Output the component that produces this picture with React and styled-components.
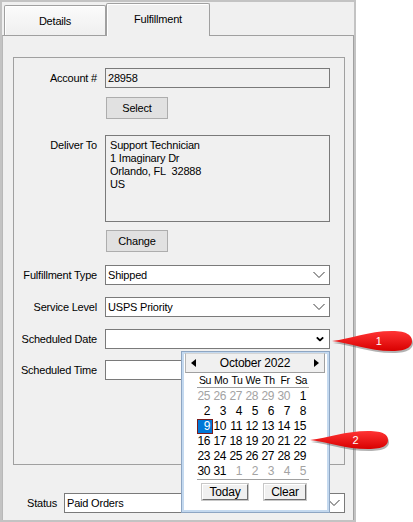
import React from "react";
import styled, { createGlobalStyle } from "styled-components";

const GlobalStyle = createGlobalStyle`
  html, body { margin: 0; padding: 0; background: #fff; }
  body {
    font-family: "Liberation Sans", Arial, sans-serif;
    font-size: 11px;
    letter-spacing: -0.2px;
    color: #000;
  }
  #root { width: 413px; height: 522px; overflow: hidden; }
`;

const Window = styled.div`
  position: relative;
  box-sizing: border-box;
  width: 356px;
  height: 522px;
  border: 2px solid #c3c3c3;
  background: #f0f0f0;
  display: flex;
  flex-direction: column;
`;

const TabStrip = styled.div`
  display: flex;
  align-items: flex-end;
  height: 33px;
  padding-left: 2px;
`;

const Tab = styled.div`
  box-sizing: border-box;
  width: ${(p) => (p.$active ? 104 : 102)}px;
  height: ${(p) => (p.$active ? 33 : 30)}px;
  margin-bottom: ${(p) => (p.$active ? -1 : 0)}px;
  position: relative;
  z-index: ${(p) => (p.$active ? 1 : 0)};
  border: 1px solid #a0a0a0;
  border-bottom: none;
  border-radius: 2px 2px 0 0;
  background: ${(p) => (p.$active ? "#f0f0f0" : "linear-gradient(#fbfbfb, #efefef)")};
  box-shadow: inset 1px 1px 0 #fff;
  display: flex;
  align-items: center;
  justify-content: center;
  padding-bottom: ${(p) => (p.$active ? 2 : 0)}px;
`;

const TabPage = styled.div`
  flex: 1;
  box-sizing: border-box;
  border: 1px solid #a0a0a0;
  border-left-color: #b8b8b8;
  border-bottom: none;
  padding: 21px 8px 0 10px;
`;

const GroupBox = styled.div`
  box-sizing: border-box;
  height: 408px;
  border: 1px solid #a0a0a0;
  padding: 10px 14px 0 0;
  display: flex;
  flex-direction: column;
`;

const FormRow = styled.div`
  display: grid;
  grid-template-columns: ${(p) => p.$cols || "83px 225px"};
  column-gap: ${(p) => p.$colGap || 8}px;
  align-items: ${(p) => (p.$top ? "start" : "center")};
  margin-top: ${(p) => p.$gap || 0}px;
`;

const Label = styled.div`
  text-align: right;
  white-space: nowrap;
  padding-top: ${(p) => p.$pad || 0}px;
  line-height: 13px;
`;

const Field = styled.div`
  position: relative;
  box-sizing: border-box;
  height: ${(p) => p.$h || 20}px;
  border: 1px solid #7a7a7a;
  background: ${(p) => p.$bg || "#fff"};
  padding: 0 2px;
  display: flex;
  align-items: center;
  white-space: nowrap;
`;

const AddressBox = styled.div`
  box-sizing: border-box;
  height: 87px;
  border: 1px solid #7a7a7a;
  background: #f0f0f0;
  padding: 3px 4px;
  line-height: 13px;
`;

const Chevron = styled.svg`
  position: absolute;
  right: ${(p) => p.$right}px;
  top: 50%;
  transform: translateY(-50%);
`;

const PushButton = styled.button`
  grid-column: 2;
  justify-self: start;
  box-sizing: border-box;
  width: 62px;
  height: 22px;
  margin-left: 1px;
  padding: 0;
  background: #e1e1e1;
  border: 1px solid #adadad;
  font: inherit;
  letter-spacing: inherit;
  color: #000;
`;

const Popup = styled.div`
  position: absolute;
  left: 179px;
  top: 349px;
  z-index: 2;
  box-sizing: border-box;
  width: 149px;
  height: 162px;
  border: 1px solid #8ea6c3;
  background: #fff;
  box-shadow: inset 0 0 0 2px #c4d9ef;
  padding: 1px 2px 0 2px;
  display: flex;
  flex-direction: column;
`;

const CalHeader = styled.div`
  box-sizing: border-box;
  height: 20px;
  margin: 0 2px 0 1px;
  border: 1px solid #a0a0a0;
  border-top-color: #d4d4d4;
  border-left-color: #b4b4b4;
  background: #f0f0f0;
  display: flex;
  align-items: center;
  justify-content: space-between;
  padding: 0 5px;
  font-size: 12px;
`;

const Arrow = styled.span`
  width: 0;
  height: 0;
  border-top: 4.5px solid transparent;
  border-bottom: 4.5px solid transparent;
  ${(p) => (p.$dir === "left" ? "border-right: 5px solid #000;" : "border-left: 5px solid #000;")}
`;

const WeekRow = styled.div`
  box-sizing: border-box;
  margin-left: 13px;
  width: 112px;
  height: 15px;
  border-bottom: 1px solid #a0a0a0;
  display: grid;
  grid-template-columns: repeat(7, 16px);
`;

const WeekName = styled.div`
  text-align: center;
  line-height: 14px;
  font-size: 10.5px;
  letter-spacing: -0.4px;
  white-space: nowrap;
`;

const DayGrid = styled.div`
  box-sizing: border-box;
  margin: 1px 0 0 13px;
  width: 112px;
  height: 91px;
  border-bottom: 1px solid #a0a0a0;
  display: grid;
  grid-template-columns: repeat(7, 16px);
  grid-auto-rows: 15px;
  align-content: start;
`;

const Day = styled.div`
  box-sizing: border-box;
  text-align: right;
  padding-right: ${(p) => (p.$selected ? 2 : 3)}px;
  line-height: ${(p) => (p.$selected ? 13 : 15)}px;
  color: ${(p) => (p.$selected ? "#fff" : p.$muted ? "#a3a3a3" : "#000")};
  background: ${(p) => (p.$selected ? "#0078d7" : "transparent")};
  border: ${(p) => (p.$selected ? "1px solid #7a1c1c" : "none")};
  font-size: 12px;
  letter-spacing: -0.4px;
`;

const CalFooter = styled.div`
  display: flex;
  gap: 16px;
  margin: 4px 0 0 18px;
`;

const CalButton = styled.button`
  box-sizing: border-box;
  width: ${(p) => p.$w}px;
  height: 16px;
  padding: 0;
  background: #f0f0f0;
  border: 1px solid;
  border-color: #fff #6f6f6f #6f6f6f #fff;
  box-shadow: 0 0 0 1px #c8c8c8;
  font: inherit;
  font-size: 12px;
  letter-spacing: -0.2px;
  color: #000;
`;

const Callout = styled.svg`
  position: absolute;
  left: ${(p) => p.$x}px;
  top: ${(p) => p.$y}px;
  z-index: 3;
  overflow: visible;
`;

const weekNames = ["Su", "Mo", "Tu", "We", "Th", "Fr", "Sa"];

const days = [
  ...[25, 26, 27, 28, 29, 30].map((d) => ({ d, muted: true })),
  ...Array.from({ length: 31 }, (_, i) => ({ d: i + 1 })),
  ...[1, 2, 3, 4, 5].map((d) => ({ d, muted: true })),
];

function ThinChevron({ right = 4 }) {
  return (
    <Chevron $right={right} width="12" height="7" viewBox="0 0 12 7">
      <polyline points="0.5,0.5 6,6 11.5,0.5" fill="none" stroke="#3c3c3c" strokeWidth="1" />
    </Chevron>
  );
}

function BoldChevron() {
  return (
    <Chevron $right={5} width="8" height="5" viewBox="0 0 8 5">
      <polyline points="0.8,0.8 4,4 7.2,0.8" fill="none" stroke="#000" strokeWidth="1.8" />
    </Chevron>
  );
}

// Red teardrop marker with a number, tip on the left
function Pointer({ x, y, w, h, n, id }) {
  const c = h / 2;
  const end = w - 2;
  const body = end - 20;
  const d = `M2,${c} C${w * 0.25},${c - 2} ${w * 0.45},1 ${body},1 C${end - 4},1 ${end},${c - 5} ${end},${c} C${end},${c + 5} ${end - 4},${h - 1} ${body},${h - 1} C${w * 0.45},${h - 1} ${w * 0.25},${c + 2} 2,${c} Z`;
  return (
    <Callout $x={x} $y={y} width={w} height={h + 3} viewBox={`0 0 ${w} ${h + 3}`}>
      <defs>
        <linearGradient id={id} x1="0" y1="0" x2="0" y2="1">
          <stop offset="0" stopColor="#ff3434" />
          <stop offset="1" stopColor="#d80000" />
        </linearGradient>
      </defs>
      <path d={d} fill="#555" opacity="0.45" transform="translate(1,2)" />
      <path d={d} fill={`url(#${id})`} />
      <text
        x={w * 0.58}
        y={c + 4}
        fill="#fff"
        fontFamily="Liberation Sans, Arial, sans-serif"
        fontSize="11"
        textAnchor="middle"
      >
        {n}
      </text>
    </Callout>
  );
}

export default function App() {
  return (
    <>
      <GlobalStyle />
      <Window>
        <TabStrip>
          <Tab>Details</Tab>
          <Tab $active>Fulfillment</Tab>
        </TabStrip>
        <TabPage>
          <GroupBox>
            <FormRow>
              <Label>Account #</Label>
              <Field $bg="#f0f0f0">28958</Field>
            </FormRow>
            <FormRow $gap={9}>
              <PushButton>Select</PushButton>
            </FormRow>
            <FormRow $gap={16} $top>
              <Label $pad={4}>Deliver To</Label>
              <AddressBox>
                <div>Support Technician</div>
                <div>1 Imaginary Dr</div>
                <div>Orlando, FL&nbsp;&nbsp;32888</div>
                <div>US</div>
              </AddressBox>
            </FormRow>
            <FormRow $gap={8}>
              <PushButton>Change</PushButton>
            </FormRow>
            <FormRow $gap={13}>
              <Label>Fulfillment Type</Label>
              <Field>
                Shipped
                <ThinChevron />
              </Field>
            </FormRow>
            <FormRow $gap={12}>
              <Label>Service Level</Label>
              <Field>
                USPS Priority
                <ThinChevron />
              </Field>
            </FormRow>
            <FormRow $gap={12}>
              <Label>Scheduled Date</Label>
              <Field>
                <BoldChevron />
              </Field>
            </FormRow>
            <FormRow $gap={11}>
              <Label>Scheduled Time</Label>
              <Field />
            </FormRow>
          </GroupBox>
          <FormRow $gap={28} $cols="44px 281px" $colGap={7}>
            <Label>Status</Label>
            <Field>
              Paid Orders
              <ThinChevron />
            </Field>
          </FormRow>
        </TabPage>

        <Popup>
          <CalHeader>
            <Arrow $dir="left" />
            <span>October 2022</span>
            <Arrow $dir="right" />
          </CalHeader>
          <WeekRow>
            {weekNames.map((w) => (
              <WeekName key={w}>{w}</WeekName>
            ))}
          </WeekRow>
          <DayGrid>
            {days.map((x, i) => (
              <Day key={i} $muted={x.muted} $selected={!x.muted && x.d === 9}>
                {x.d}
              </Day>
            ))}
          </DayGrid>
          <CalFooter>
            <CalButton $w={46}>Today</CalButton>
            <CalButton $w={42}>Clear</CalButton>
          </CalFooter>
        </Popup>

        <Pointer x={328} y={328} w={84} h={22} n="1" id="calloutRedA" />
        <Pointer x={306} y={428} w={82} h={20} n="2" id="calloutRedB" />
      </Window>
    </>
  );
}
